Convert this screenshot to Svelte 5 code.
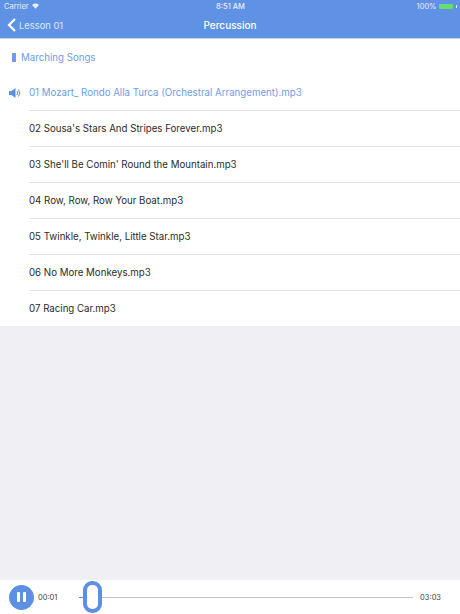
<script>
    const tracks = [
        "01 Mozart_ Rondo Alla Turca (Orchestral Arrangement).mp3",
        "02 Sousa's Stars And Stripes Forever.mp3",
        "03 She'll Be Comin' Round the Mountain.mp3",
        "04 Row, Row, Row Your Boat.mp3",
        "05 Twinkle, Twinkle, Little Star.mp3",
        "06 No More Monkeys.mp3",
        "07 Racing Car.mp3"
    ];
</script>

<div class="page">
    <header>
        <div class="status">
            <div class="carrier">
                Carrier
                <svg width="7" height="6" viewBox="0 0 10 8"><path d="M0 2.4 Q5 -1.6 10 2.4 L5 8 Z" fill="#fff" opacity="0.85"/></svg>
            </div>
            <div class="time">8:51 AM</div>
            <div class="battery">
                100%
                <span class="cell"><span class="charge"></span></span>
                <span class="nub"></span>
            </div>
        </div>
        <div class="nav">
            <div class="back">
                <svg width="10" height="14" viewBox="0 0 10 14"><path d="M8 1 L2 7 L8 13" fill="none" stroke="#fff" stroke-width="2.2"/></svg>
                Lesson 01
            </div>
            <div class="title">Percussion</div>
        </div>
    </header>

    <div class="list">
        <div class="section"><span class="bar"></span>Marching Songs</div>
        {#each tracks as track, i}
            <div class="row" class:playing={i === 0}>
                {#if i === 0}
                    <svg class="speaker" width="12" height="12" viewBox="0 0 12 12">
                        <path d="M0 4 H2.5 L6.5 1 V11 L2.5 8 H0 Z" fill="#5b90e3"/>
                        <path d="M8 4 Q9.5 6 8 8 M9.5 2.5 Q12 6 9.5 9.5" fill="none" stroke="#5b90e3" stroke-width="1"/>
                    </svg>
                {/if}
                <div class="name">{track}</div>
            </div>
        {/each}
    </div>

    <div class="spacer"></div>

    <div class="player">
        <button class="pause" aria-label="Pause">
            <span></span><span></span>
        </button>
        <span class="clock">00:01</span>
        <div class="track">
            <span class="done"></span>
            <span class="thumb"></span>
            <span class="rest"></span>
        </div>
        <span class="clock">03:03</span>
    </div>
</div>

<style>
    :global(body) {
        margin: 0;
    }

    .page {
        width: 460px;
        height: 614px;
        display: flex;
        flex-direction: column;
        background: #efeff4;
        font-family: "Inter", "Liberation Sans", sans-serif;
        overflow: hidden;
    }

    header {
        background: #5f92e4;
        color: #fff;
        height: 38px;
        flex: none;
        border-bottom: 1px solid #c4d4ee;
        box-sizing: content-box;
    }

    .status {
        height: 12px;
        display: grid;
        grid-template-columns: 1fr auto 1fr;
        align-items: center;
        padding: 0 3px 0 4px;
        font-size: 7.5px;
        color: #e8effb;
    }

    .carrier {
        display: flex;
        align-items: center;
        gap: 3px;
    }

    .time {
        font-weight: 500;
    }

    .battery {
        display: flex;
        align-items: center;
        justify-content: flex-end;
        gap: 2px;
    }

    .cell {
        width: 15px;
        height: 6px;
        display: block;
        padding: 0.5px;
        box-sizing: border-box;
    }

    .charge {
        display: block;
        height: 100%;
        background: #66dd70;
        border-radius: 1px;
    }

    .nub {
        width: 1.5px;
        height: 3px;
        background: #e8effb;
    }

    .nav {
        height: 26px;
        display: grid;
        grid-template-columns: 1fr auto 1fr;
        align-items: center;
    }

    .back {
        display: flex;
        align-items: center;
        gap: 2px;
        padding-left: 7px;
        font-size: 9.4px;
        color: #dfe9f9;
    }

    .title {
        font-size: 10px;
        font-weight: 500;
    }

    .list {
        background: #fff;
        flex: none;
    }

    .section {
        height: 36px;
        display: flex;
        align-items: center;
        padding-left: 12px;
        font-size: 9.7px;
        color: #6f9de6;
    }

    .bar {
        width: 4px;
        height: 9px;
        margin-right: 5px;
        background: #6f9de6;
    }

    .row {
        height: 36px;
        position: relative;
        display: flex;
        align-items: center;
        margin-left: 29px;
        border-bottom: 1px solid #e4e4e6;
        box-sizing: border-box;
        font-size: 9.7px;
        color: #2b2b2b;
    }

    .row:last-child {
        height: 35px;
        border-bottom: none;
    }

    .row.playing {
        color: #6f9de6;
    }

    .speaker {
        position: absolute;
        left: -20px;
        top: 12px;
    }

    .spacer {
        flex: 1;
    }

    .player {
        height: 34px;
        flex: none;
        background: #fff;
        display: flex;
        align-items: center;
        padding: 0 19px 0 9px;
        font-size: 7.5px;
        color: #444;
    }

    .pause {
        width: 25px;
        height: 25px;
        border: none;
        padding: 0;
        border-radius: 50%;
        background: #5b90e3;
        display: flex;
        align-items: center;
        justify-content: center;
        gap: 3px;
        margin-right: 4px;
    }

    .pause span {
        width: 3px;
        height: 10px;
        background: #fff;
        border-radius: 1px;
    }

    .track {
        flex: 1;
        display: flex;
        align-items: center;
        margin: 0 7px 0 22px;
    }

    .done {
        width: 4px;
        height: 1px;
        background: #5b90e3;
    }

    .thumb {
        width: 11px;
        height: 24px;
        flex: none;
        border: 4px solid #5b90e3;
        border-radius: 9px;
        background: #fff;
    }

    .rest {
        flex: 1;
        height: 1px;
        background: #c4c4c4;
    }
</style>
